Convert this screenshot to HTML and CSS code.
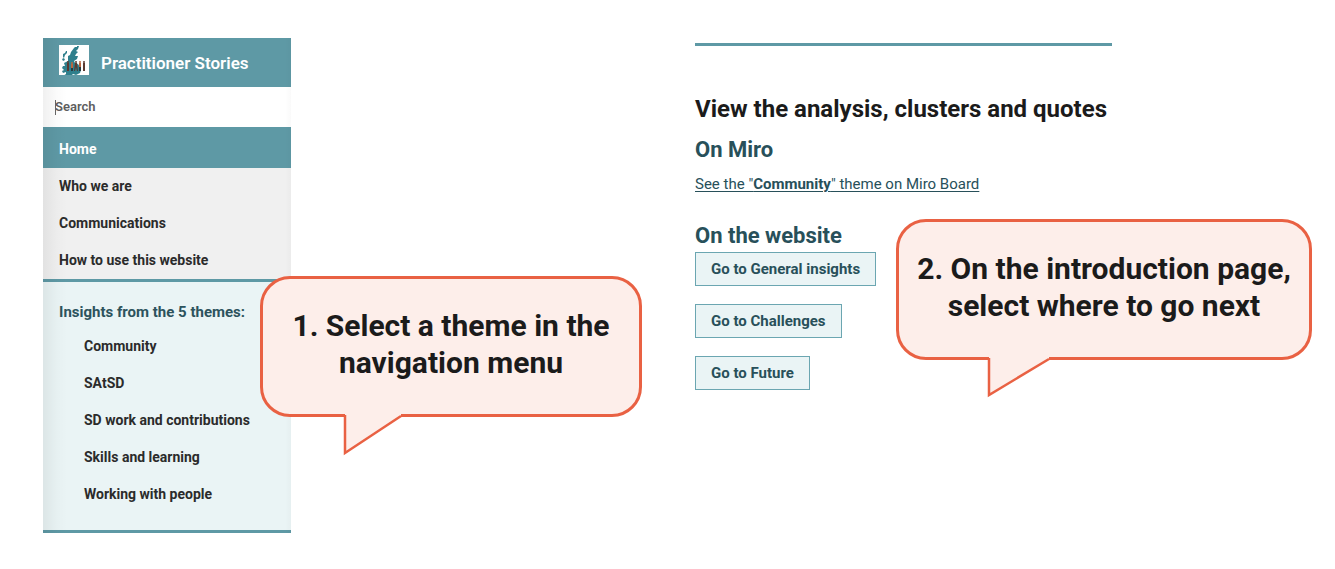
FILE: index.html
```html
<!DOCTYPE html>
<html lang="en">
<head>
<meta charset="utf-8">
<title>Practitioner Stories</title>
<link rel="stylesheet" href="styles.css">
</head>
<body>
<div class="page">
  <section class="panel">
    <aside class="sidebar">
      <header class="brand">
        <svg class="logo" viewBox="0 0 30 30" aria-hidden="true">
          <rect width="30" height="30" fill="#fff"/>
          <path fill="#2f7f8c" d="M15 3l1-1 2 0 0-1 2 0-1 3-2 2 2 1-2 2-1 2 3 0-1 3-3 2 1 2 3 1 2 3-1 2 2 1-1 3-4 2-3-1-2 2-3 0-3 1-2-1 3-2 0-2-3 1-1-2 2-1-2-2 1-2 2 0-1-3 2-1 2-1 0-2 0-3 2-1 1-3zM7 6l1 0 0 2-2 2-1 3-1-1 0-3 2-1zM3 14l2-1 1 2-2 1z"/>
          <g fill="#5b3a32">
            <circle cx="9" cy="17" r="1"/><path d="M8 18h2v8h-2z"/>
            <circle cx="17" cy="17" r="1"/><path d="M16 18h2l1 8h-1l-1-4-1 4h-1z"/>
            <circle cx="25" cy="17" r="1"/><path d="M24 18h2v8h-2z"/>
          </g>
          <g fill="#b9653f">
            <circle cx="13" cy="18" r="1"/><path d="M12 19h2v4h-2z"/>
            <circle cx="21" cy="17" r="1"/><path d="M20 18h2v4h-2z"/>
          </g>
          <path fill="#263940" d="M12 23h2v3h-2zM20 22h2v4h-2z"/>
        </svg>
        <span class="brand-name">Practitioner Stories</span>
      </header>
      <div class="search">
        <span class="caret"></span>
        <input class="search-input" type="search" placeholder="Search" aria-label="Search">
      </div>
      <nav>
        <a class="nav-link current" href="#">Home</a>
        <a class="nav-link" href="#">Who we are</a>
        <a class="nav-link" href="#">Communications</a>
        <a class="nav-link" href="#">How to use this website</a>
        <div class="themes">
          <h2 class="themes-title">Insights from the 5 themes:</h2>
          <a class="nav-link nested" href="#">Community</a>
          <a class="nav-link nested" href="#">SAtSD</a>
          <a class="nav-link nested" href="#">SD work and contributions</a>
          <a class="nav-link nested" href="#">Skills and learning</a>
          <a class="nav-link nested" href="#">Working with people</a>
        </div>
      </nav>
    </aside>
    <div class="callout callout-menu">
      <p class="callout-text">1. Select a theme in the<br>navigation menu</p>
      <svg class="tail" viewBox="0 0 64 42" aria-hidden="true"><path class="tail-fill" d="M3 0v38L59 2V0z"/><path class="tail-line" d="M3 1v38L59 2"/></svg>
    </div>
  </section>
  <main class="panel">
    <div class="content">
      <h1 class="title">View the analysis, clusters and quotes</h1>
      <h2 class="subtitle">On Miro</h2>
      <a class="board-link" href="#">See the "<b>Community</b>" theme on Miro Board</a>
      <h2 class="subtitle website">On the website</h2>
      <div class="buttons">
        <button class="button" type="button">Go to General insights</button>
        <button class="button" type="button">Go to Challenges</button>
        <button class="button" type="button">Go to Future</button>
      </div>
    </div>
    <div class="callout callout-intro">
      <p class="callout-text">2. On the introduction page,<br>select where to go next</p>
      <svg class="tail" viewBox="0 0 64 42" aria-hidden="true"><path class="tail-fill" d="M3 0v38L63 2V0z"/><path class="tail-line" d="M3 1v37L63 2"/></svg>
    </div>
  </main>
</div>
</body>
</html>
```
FILE: styles.css
```css
* { box-sizing: border-box; }
body {
  margin: 0;
  background: #fff;
  color: #1b1b1b;
  font-family: Roboto, "Liberation Sans", sans-serif;
}
h1, h2, p { margin: 0; }
.page {
  display: grid;
  grid-template-columns: 652fr 640fr;
  padding: 38px 0 36px 43px;
}
.panel { position: relative; }

.sidebar {
  position: relative;
  width: 248px;
  background: #f0f0f0;
}
.sidebar::after {
  content: "";
  position: absolute;
  inset: 0;
  pointer-events: none;
  background: linear-gradient(to right, rgba(0,0,0,.06), rgba(0,0,0,.015) 14px, transparent 24px, transparent 242px, rgba(0,0,0,.02));
}
.brand {
  display: flex;
  align-items: center;
  gap: 12px;
  height: 49px;
  padding: 0 16px;
  background: #5e99a5;
  color: #fff;
}
.logo {
  width: 30px;
  height: 30px;
  margin-bottom: 5px;
}
.brand-name { font-size: 17px; font-weight: 600; }
.search {
  position: relative;
  display: flex;
  height: 40px;
  padding-bottom: 1px;
  background: #fff;
}
.caret {
  position: absolute;
  left: 12px;
  top: 13px;
  width: 1px;
  height: 15px;
  background: #666;
}
.search-input {
  flex: 1;
  min-width: 0;
  padding: 0 12px;
  border: 0;
  outline: 0;
  background: none;
  font: 600 13px Roboto, sans-serif;
}
.search-input::placeholder { color: #5e5e5e; opacity: 1; }
.nav-link {
  display: block;
  padding: 0 16px;
  color: #2b2b2b;
  font-size: 14px;
  font-weight: 700;
  line-height: 37px;
  text-decoration: none;
}
.current {
  padding: 4px 16px 0;
  background: #5e99a5;
  color: #fff;
}
.themes {
  padding: 15px 0 17px;
  border-top: 3px solid #5e99a5;
  border-bottom: 3px solid #5e99a5;
  background: #eaf4f5;
}
.themes-title {
  padding: 0 16px;
  color: #2d535d;
  font-size: 15px;
  font-weight: 700;
  line-height: 31px;
}
.nested { padding-left: 41px; }

.content {
  width: 417px;
  margin-top: 5px;
  padding-top: 45px;
  border-top: 3px solid #5e99a5;
}
.title {
  font-size: 24px;
  font-weight: 700;
  line-height: 36px;
  white-space: nowrap;
}
.subtitle {
  padding-top: 8px;
  color: #28505a;
  font-size: 22px;
  font-weight: 700;
  line-height: 30px;
}
.board-link {
  display: block;
  padding-top: 7px;
  color: #28505a;
  font-size: 15px;
  line-height: 24px;
  text-underline-offset: 2px;
}
.board-link b { font-weight: 700; }
.website { padding-top: 25px; }
.buttons {
  display: flex;
  flex-direction: column;
  align-items: flex-start;
  gap: 18px;
  padding-top: 1px;
}
.button {
  padding: 0 15px;
  border: 1px solid #6ba6b1;
  background: #eaf4f5;
  color: #28505a;
  font: 700 15px/32px Roboto, sans-serif;
}

.callout {
  position: absolute;
  padding: 28px 0 33px;
  border: 3px solid #e96143;
  border-radius: 30px;
  background: #fdeeea;
}
.callout-menu { left: 217px; top: 238px; width: 382px; }
.callout-intro { left: 201px; top: 181px; width: 416px; }
.callout-text {
  font-size: 30px;
  font-weight: 700;
  line-height: 37px;
  text-align: center;
  white-space: nowrap;
}
.tail {
  position: absolute;
  top: 100%;
  left: 79px;
  width: 64px;
  height: 42px;
}
.callout-intro .tail { left: 87px; }
.tail-fill { fill: #fdeeea; }
.tail-line { fill: none; stroke: #e96143; stroke-width: 2.5; }
```
